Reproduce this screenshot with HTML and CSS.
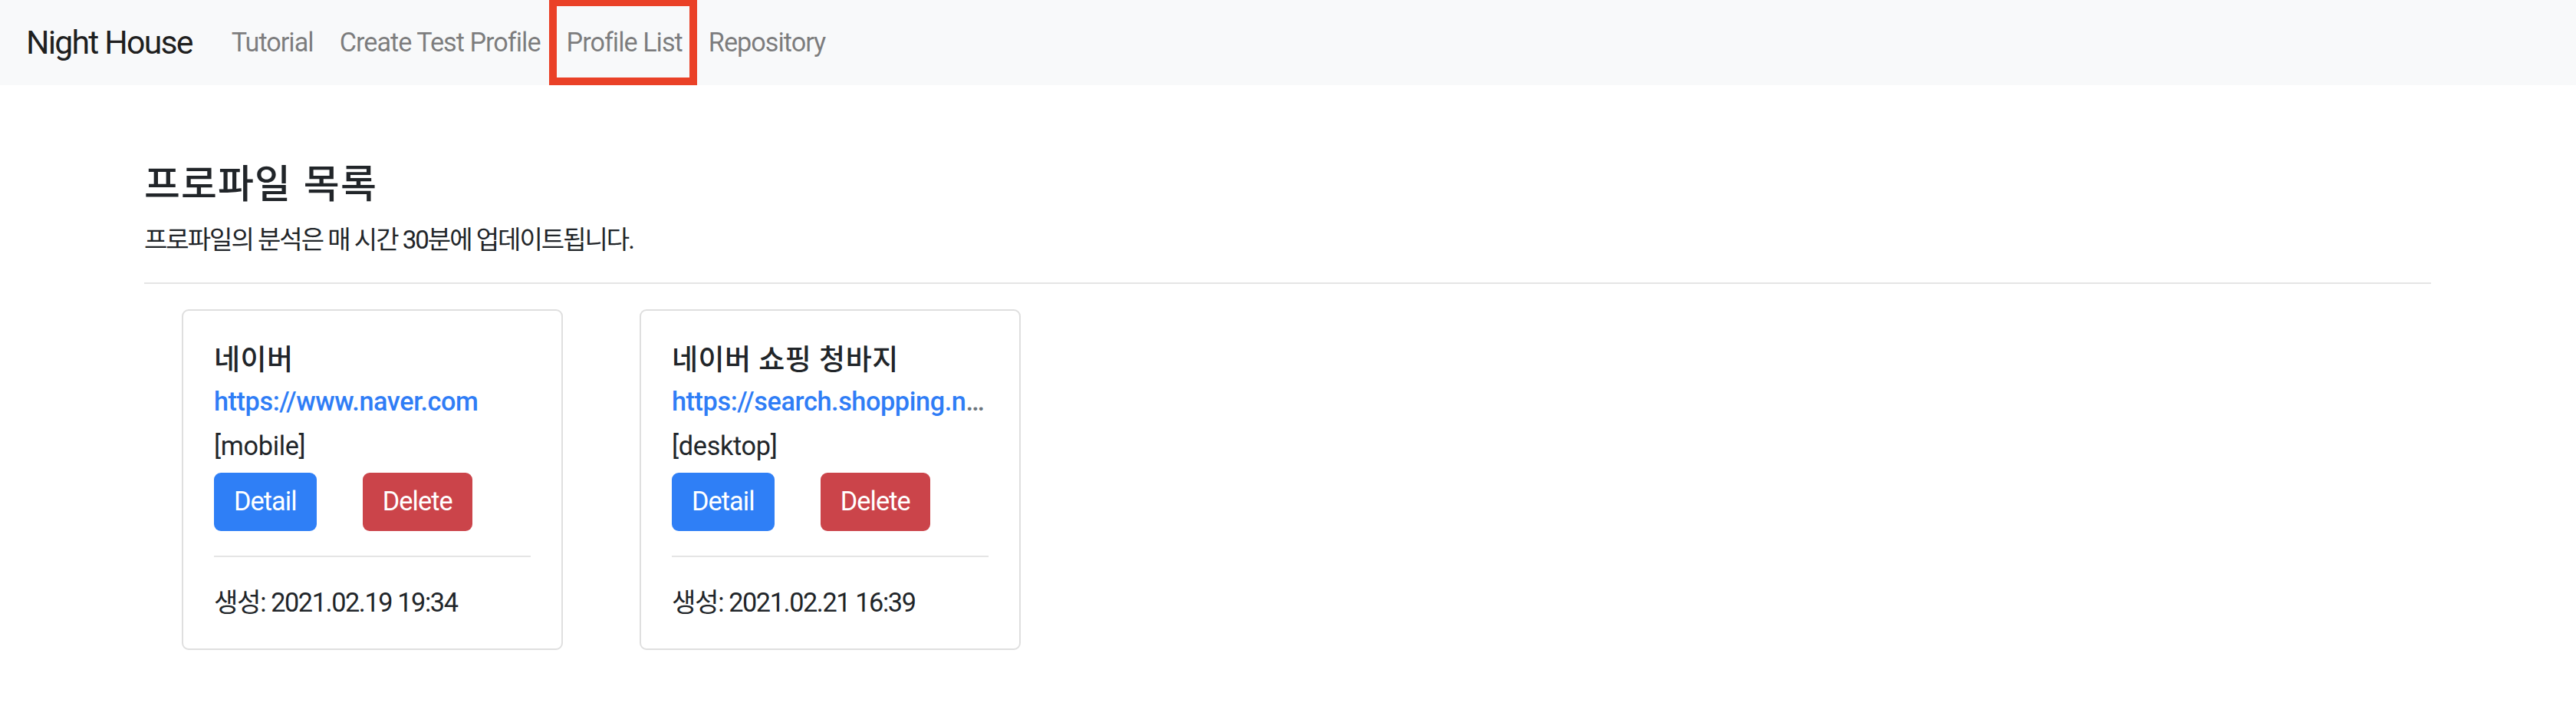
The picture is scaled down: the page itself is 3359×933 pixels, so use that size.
FILE: index.html
```html
<!DOCTYPE html>
<html lang="ko">
<head>
<meta charset="utf-8">
<title>Night House</title>
<link rel="stylesheet" href="styles.css">
</head>
<body>
<nav class="navbar">
  <a class="brand" href="#">Night House</a>
  <ul class="nav">
    <li class="nav-item"><a class="nav-link" href="#">Tutorial</a></li>
    <li class="nav-item"><a class="nav-link" href="#">Create Test Profile</a></li>
    <li class="nav-item"><a class="nav-link active" href="#">Profile List</a></li>
    <li class="nav-item"><a class="nav-link" href="#">Repository</a></li>
  </ul>
</nav>
<main class="container">
  <h1 class="page-title">프로파일 목록</h1>
  <p class="lead-text">프로파일의 분석은 매 시간 30분에 업데이트됩니다.</p>
  <hr class="divider">
  <div class="card-row">
    <div class="card">
      <h5 class="card-title">네이버</h5>
      <h6 class="card-subtitle"><a href="#">https://www.naver.com</a></h6>
      <p class="card-text">[mobile]</p>
      <div class="actions">
        <a class="btn btn-primary" href="#">Detail</a>
        <a class="btn btn-danger" href="#">Delete</a>
      </div>
      <hr class="card-divider">
      <p class="created">생성: 2021.02.19 19:34</p>
    </div>
    <div class="card">
      <h5 class="card-title">네이버 쇼핑 청바지</h5>
      <h6 class="card-subtitle"><a href="#">https://search.shopping.naver.com/search/all?query=청바지</a></h6>
      <p class="card-text">[desktop]</p>
      <div class="actions">
        <a class="btn btn-primary" href="#">Detail</a>
        <a class="btn btn-danger" href="#">Delete</a>
      </div>
      <hr class="card-divider">
      <p class="created">생성: 2021.02.21 16:39</p>
    </div>
  </div>
</main>
</body>
</html>
```
FILE: styles.css
```css
* {
  box-sizing: border-box;
}

html,
body {
  margin: 0;
  padding: 0;
}

body {
  font-family: Roboto, "Noto Sans CJK KR", sans-serif;
  color: #212529;
  background: #ffffff;
  font-size: 34.24px;
}

/* ---------- navbar ---------- */
.navbar {
  position: relative;
  display: flex;
  align-items: stretch;
  height: 111px;
  padding: 0 34px;
  background: #f8f9fa;
}

.brand {
  display: flex;
  align-items: center;
  margin-right: 34px;
  font-size: 42.8px;
  line-height: 1.2;
  letter-spacing: -1.8px;
  color: rgba(0, 0, 0, 0.9);
  text-decoration: none;
}

.nav {
  display: flex;
  align-items: stretch;
  margin: 0;
  padding: 0;
  list-style: none;
}

.nav-item {
  display: flex;
}

.nav-link {
  position: relative;
  display: flex;
  align-items: center;
  padding: 0 17px;
  font-size: 34.24px;
  line-height: 1.2;
  letter-spacing: -1px;
  color: rgba(0, 0, 0, 0.5);
  text-decoration: none;
}

.nav-link.active::after {
  content: "";
  position: absolute;
  top: -2px;
  bottom: 0;
  left: -6px;
  right: -2px;
  border: 10px solid #ea4127;
}

/* ---------- content ---------- */
.container {
  padding: 97px 189px 0 188px;
}

.page-title {
  margin: 0 0 15px;
  font-size: 51px;
  font-weight: 500;
  line-height: 65px;
  letter-spacing: 1.1px;
  word-spacing: 2px;
}

.lead-text {
  margin: 0;
  font-size: 33px;
  line-height: 49px;
  letter-spacing: -2px;
}

.divider {
  margin: 31px 0 33px;
  border: 0;
  border-top: 2px solid #e5e5e5;
  height: 0;
}

.card-row {
  display: flex;
  gap: 100px;
  padding-left: 49px;
}

.card {
  width: 497px;
  padding: 40px 40px 34px;
  border: 2px solid #dfdfdf;
  border-radius: 9px;
  background: #ffffff;
}

.card-title {
  margin: 3px 0 11px;
  font-size: 37px;
  font-weight: 500;
  line-height: 44px;
  letter-spacing: 0.5px;
}

.card-subtitle {
  margin: 0 0 12px;
  font-size: 34.24px;
  font-weight: 500;
  line-height: 41px;
  letter-spacing: -0.4px;
  color: #6c757d;
  white-space: nowrap;
  overflow: hidden;
  text-overflow: ellipsis;
}

.card-subtitle a {
  color: #2f7df6;
  text-decoration: none;
}

.card-text {
  margin: 0 0 9px;
  line-height: 51px;
  letter-spacing: -0.3px;
}

.actions {
  display: flex;
  gap: 60px;
}

.btn {
  display: inline-flex;
  align-items: center;
  justify-content: center;
  height: 76px;
  padding: 0 26px;
  border-radius: 9px;
  font-size: 34.24px;
  line-height: 1.2;
  letter-spacing: -0.9px;
  color: #ffffff;
  text-decoration: none;
}

.btn-primary {
  background: #2f7ff6;
}

.btn-danger {
  background: #cb444a;
}

.card-divider {
  margin: 32px 0 34px;
  border: 0;
  border-top: 2px solid #e5e5e5;
  height: 0;
}

.created {
  margin: 0;
  line-height: 51px;
  letter-spacing: -1.4px;
}
```
